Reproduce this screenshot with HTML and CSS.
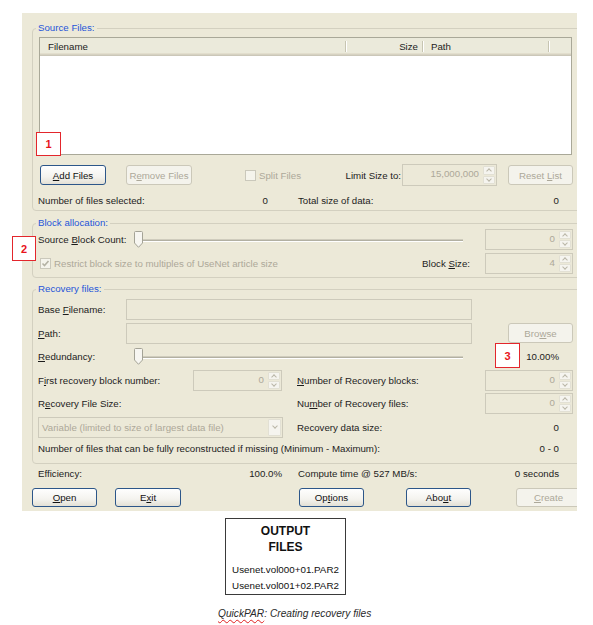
FILE: index.html
```html
<!DOCTYPE html>
<html>
<head>
<meta charset="utf-8">
<title>QuickPAR</title>
<link rel="stylesheet" href="styles.css">
</head>
<body>
<div class="page">
  <div class="window">

    <div class="group g-source">
      <span class="legend">Source Files:</span>
      <div class="listview">
        <div class="lv-head">
          <div class="lv-col c-name">Filename</div>
          <div class="lv-col c-size">Size</div>
          <div class="lv-col c-path">Path</div>
          <div class="lv-col c-rest"></div>
        </div>
      </div>
      <div class="row r-btns">
        <button class="btn b-add"><u>A</u>dd Files</button>
        <button class="btn dis b-remove">R<u>e</u>move Files</button>
        <div class="chk-wrap w-split"><span class="chk"></span><span class="gray">Split Files</span></div>
        <div class="lbl-right w-limit">Limit Size to:</div>
        <div class="spin s-limit"><div class="spin-box">15,000,000</div><div class="spin-arrows"><span class="arr up"></span><span class="arr dn"></span></div></div>
        <button class="btn dis b-reset">Reset <u>L</u>ist</button>
      </div>
      <div class="row r-info">
        <div class="kv kv-src-left"><span>Number of files selected:</span><span>0</span></div>
        <div class="kv kv-src-right"><span>Total size of data:</span><span>0</span></div>
      </div>
    </div>

    <div class="group g-block">
      <span class="legend">Block allocation:</span>
      <div class="row">
        <div class="lbl w-96">Source <u>B</u>lock Count:</div>
        <div class="slider"><span class="track"></span><svg class="thumb" width="9" height="17" viewBox="0 0 9 17"><path d="M0.5 1.5 Q0.5 0.5 1.5 0.5 H7.5 Q8.5 0.5 8.5 1.5 V12 L4.5 16.3 L0.5 12 Z" fill="#f7f6f1" stroke="#a4a396"/></svg></div>
        <div class="spin s-right"><div class="spin-box">0</div><div class="spin-arrows"><span class="arr up"></span><span class="arr dn"></span></div></div>
      </div>
      <div class="row r-gap2">
        <div class="chk-wrap w-restrict"><span class="chk checked"><svg width="9" height="9" viewBox="0 0 9 9"><path d="M1.5 4.5 L3.5 6.5 L7.5 2" fill="none" stroke="#b4b2a4" stroke-width="1.6"/></svg></span><span class="gray">Restrict block size to multiples of UseNet article size</span></div>
        <div class="lbl lbl-bs">Block <u>S</u>ize:</div>
        <div class="spin s-right"><div class="spin-box">4</div><div class="spin-arrows"><span class="arr up"></span><span class="arr dn"></span></div></div>
      </div>
    </div>

    <div class="group g-recov">
      <span class="legend">Recovery files:</span>
      <div class="row">
        <div class="lbl w-88">Base <u>F</u>ilename:</div>
        <div class="field w-346"></div>
      </div>
      <div class="row r-gap2">
        <div class="lbl w-88"><u>P</u>ath:</div>
        <div class="field w-346"></div>
        <button class="btn dis b-browse">Bro<u>w</u>se</button>
      </div>
      <div class="row r-gap1">
        <div class="lbl w-96"><u>R</u>edundancy:</div>
        <div class="slider"><span class="track"></span><svg class="thumb" width="9" height="17" viewBox="0 0 9 17"><path d="M0.5 1.5 Q0.5 0.5 1.5 0.5 H7.5 Q8.5 0.5 8.5 1.5 V12 L4.5 16.3 L0.5 12 Z" fill="#f7f6f1" stroke="#a4a396"/></svg></div>
        <div class="lbl-right w-96">10.00%</div>
      </div>
      <div class="row r-gap2">
        <div class="lbl w-155">F<u>i</u>rst recovery block number:</div>
        <div class="spin s-left"><div class="spin-box">0</div><div class="spin-arrows"><span class="arr up"></span><span class="arr dn"></span></div></div>
        <div class="lbl grow ml-15"><u>N</u>umber of Recovery blocks:</div>
        <div class="spin s-right"><div class="spin-box">0</div><div class="spin-arrows"><span class="arr up"></span><span class="arr dn"></span></div></div>
      </div>
      <div class="row r-gap1">
        <div class="lbl w-244">R<u>e</u>covery File Size:</div>
        <div class="lbl grow ml-15">Nu<u>m</u>ber of Recovery files:</div>
        <div class="spin s-right"><div class="spin-box">0</div><div class="spin-arrows"><span class="arr up"></span><span class="arr dn"></span></div></div>
      </div>
      <div class="row r-gap2">
        <div class="combo"><span class="combo-text">Variable (limited to size of largest data file)</span><span class="combo-btn"><span class="arr dn"></span></span></div>
        <div class="kv grow ml-14 pr-14"><span>Recovery data size:</span><span>0</span></div>
      </div>
      <div class="row r-gap2 r-text">
        <div class="kv grow pr-14"><span>Number of files that can be fully reconstructed if missing (Minimum - Maximum):</span><span>0 - 0</span></div>
      </div>
    </div>

    <div class="row r-eff">
      <div class="kv w-244"><span>Efficiency:</span><span>100.0%</span></div>
      <div class="kv kv-src-right ml-16"><span>Compute time @ 527 MB/s:</span><span>0 seconds</span></div>
    </div>

    <div class="row r-main">
      <button class="btn b-open"><u>O</u>pen</button>
      <button class="btn b-exit">E<u>x</u>it</button>
      <button class="btn b-options">Op<u>t</u>ions</button>
      <button class="btn b-about">Abo<u>u</u>t</button>
      <button class="btn dis b-create"><u>C</u>reate</button>
    </div>
  </div>

  <div class="output">
    <div class="out-title">OUTPUT</div>
    <div class="out-title">FILES</div>
    <div class="out-file first">Usenet.vol000+01.PAR2</div>
    <div class="out-file">Usenet.vol001+02.PAR2</div>
  </div>
  <div class="caption"><span class="spell">QuickPAR</span>: Creating recovery files</div>

  <div class="mark m1">1</div>
  <div class="mark m2">2</div>
  <div class="mark m3">3</div>
</div>
</body>
</html>
```

FILE: styles.css
```css
body {
  margin: 0;
  background: #ffffff;
  font-family: "Liberation Sans", Arial, sans-serif;
  font-size: 9.7px;
  color: #1c1c1c;
}

.page {
  position: relative;
  width: 593px;
  height: 625px;
  padding-top: 13px;
  box-sizing: border-box;
  overflow: hidden;
}

.window {
  margin-left: 22px;
  width: 555px;
  height: 498px;
  background: #ece9d8;
  padding: 15px 0 0 10px;
  box-sizing: border-box;
  overflow: hidden;
}

/* group boxes */
.group {
  position: relative;
  width: 560px;
  border: 1px solid #d3d0c0;
  border-radius: 4px;
  box-sizing: border-box;
  padding-left: 5px;
}

.legend {
  position: absolute;
  top: -7px;
  left: 3px;
  padding: 0 2px;
  background: #ece9d8;
  color: #1f55d8;
  line-height: 12px;
}

.g-source { height: 183px; padding-top: 8px; }
.g-block { height: 55px; margin-top: 12px; padding-top: 4px; }
.g-recov { height: 175px; margin-top: 11px; padding-top: 8px; }

/* rows */
.row {
  display: flex;
  align-items: center;
  width: 535px;
  height: 22px;
  white-space: nowrap;
}

.r-gap1 { margin-top: 1px; }
.r-gap2 { margin-top: 2px; }
.r-text { height: 16px; }

.r-btns { margin-top: 9px; }
.r-info { margin-top: 6px; height: 16px; }

.r-eff { margin-top: 1px; height: 16px; margin-left: 6px; }
.r-main { margin-top: 7px; height: 19px; width: 560px; }

/* list view */
.listview {
  margin-left: 1px;
  width: 533px;
  height: 118px;
  border: 1px solid #a9a898;
  background: #ffffff;
  box-sizing: border-box;
}

.lv-head {
  display: flex;
  height: 18px;
  background: linear-gradient(#ebeadb 0 15px, #e2decd 15px 16px, #d6d2c2 16px 17px, #cbc7b8 17px);
}

.lv-col {
  position: relative;
  height: 17px;
  line-height: 17px;
  box-sizing: border-box;
}

.lv-col::after {
  content: "";
  position: absolute;
  right: 0;
  top: 3px;
  bottom: 3px;
  width: 1px;
  background: #c7c5b2;
  box-shadow: 1px 0 0 #ffffff;
}

.c-name { width: 306px; padding-left: 8px; }
.c-size { width: 77px; padding-right: 5px; text-align: right; }
.c-path { width: 126px; padding-left: 8px; }
.c-rest { flex: 1; }
.c-rest::after { display: none; }

/* buttons */
.btn {
  flex: none;
  font: inherit;
  color: #111111;
  width: 65px;
  height: 20px;
  padding: 0;
  margin: 0;
  border: 1px solid #2c5689;
  border-radius: 3px;
  background: linear-gradient(#fefefe, #f4f3ee 60%, #e3e0d5);
  box-sizing: border-box;
  text-align: center;
  white-space: nowrap;
}

.btn.dis {
  color: #aca899;
  border-color: #cbc8b9;
  background: #f4f3ec;
}

.b-add { margin-left: 2px; width: 66px; }
.b-remove { margin-left: 20px; width: 66px; }
.b-reset { margin-left: 11px; }
.b-browse { margin-left: 36px; }

.r-main .btn { height: 19px; }
.b-open { width: 65px; }
.b-exit { margin-left: 18px; width: 66px; }
.b-options { margin-left: 118px; }
.b-about { margin-left: 42px; }
.b-create { margin-left: 45px; }

/* checkboxes */
.chk-wrap {
  display: flex;
  align-items: center;
}

.w-split { margin-left: 53px; width: 91px; flex: none; }
.w-restrict { margin-left: 2px; flex: 1; }

.chk {
  display: inline-flex;
  align-items: center;
  justify-content: center;
  width: 11px;
  height: 11px;
  border: 1px solid #cac8bb;
  background: #f5f4ec;
  box-sizing: border-box;
  margin-right: 3px;
}

.gray { color: #aca899; }

/* labels */
.lbl { flex: none; }
.lbl-right { text-align: right; flex: none; }
.grow { flex: 1; }
.w-limit { width: 65px; }
.w-88 { width: 88px; }
.w-96 { width: 96px; }
.w-155 { width: 155px; }
.w-244 { width: 244px; flex: none; }
.ml-14 { margin-left: 14px; }
.ml-15 { margin-left: 15px; }
.ml-16 { margin-left: 16px; }
.pr-14 { padding-right: 14px; }
.lbl-bs { margin-right: 15px; }

/* key/value */
.kv {
  display: flex;
  justify-content: space-between;
  align-items: center;
  box-sizing: border-box;
}

.kv-src-left { width: 230px; flex: none; }
.kv-src-right { margin-left: 30px; width: 261px; flex: none; }
.r-eff .kv-src-right { margin-left: 16px; }

/* fields */
.field {
  flex: none;
  height: 21px;
  border: 1px solid #cdcabb;
  background: #ece9d8;
  box-sizing: border-box;
}

.w-346 { width: 346px; }

/* spinners */
.spin {
  flex: none;
  display: flex;
  height: 21px;
}

.s-limit { margin-left: 1px; width: 95px; height: 22px; }
.s-right { width: 88px; }
.s-left { width: 89px; }

.spin-box {
  flex: 1;
  border: 1px solid #cdcabb;
  border-right: none;
  background: #ece9d8;
  color: #aca899;
  text-align: right;
  padding-right: 4px;
  line-height: 18px;
  box-sizing: border-box;
}

.spin-arrows {
  width: 14px;
  display: flex;
  flex-direction: column;
  border: 1px solid #cdcabb;
  border-left: none;
  background: #ece9d8;
  box-sizing: border-box;
  padding: 1px 1px 1px 0;
  gap: 1px;
}

.arr {
  position: relative;
  flex: 1;
  background: #f5f4ef;
  border: 1px solid #e2e0d4;
  border-radius: 1px;
}

.arr::before {
  content: "";
  position: absolute;
  left: 50%;
  top: 50%;
  width: 3px;
  height: 3px;
  border-top: 1px solid #b9b6a7;
  border-left: 1px solid #b9b6a7;
}

.arr.up::before { transform: translate(-50%, -25%) rotate(45deg); }
.arr.dn::before { transform: translate(-50%, -75%) rotate(225deg); }

/* sliders */
.slider {
  position: relative;
  width: 329px;
  height: 22px;
  flex: none;
}

.track {
  position: absolute;
  left: 6px;
  right: 0;
  top: 11px;
  height: 1px;
  background: #b2b0a2;
  border-bottom: 1px solid #ffffff;
  border-top: 1px solid #cfccbd;
}

.thumb {
  position: absolute;
  left: 0;
  top: 3px;
}

.g-block .row:first-of-type .spin { margin-left: 22px; }

/* combo */
.combo {
  display: flex;
  width: 245px;
  height: 21px;
  border: 1px solid #cdcabb;
  background: #ece9d8;
  box-sizing: border-box;
  flex: none;
}

.combo-text {
  flex: 1;
  color: #aca899;
  padding-left: 3px;
  line-height: 19px;
}

.combo-btn {
  display: flex;
  width: 15px;
  padding: 1px;
  box-sizing: border-box;
}

/* output box */
.output {
  margin: 7px 0 0 225px;
  width: 121px;
  height: 77px;
  border: 1px solid #3a3a3a;
  box-sizing: border-box;
  padding-top: 4px;
  text-align: center;
  font-size: 9.8px;
  color: #111111;
}

.out-title {
  font-size: 12px;
  font-weight: bold;
  line-height: 16px;
}

.out-file { line-height: 16px; }
.out-file.first { margin-top: 7px; }

.caption {
  margin: 12px 0 0 218px;
  font-size: 10.2px;
  font-style: italic;
  line-height: 14px;
  color: #2a2a2a;
}

.spell {
  text-decoration: underline wavy #e02020;
  text-decoration-thickness: 1px;
  text-underline-offset: 2px;
}

/* annotation marks */
.mark {
  position: absolute;
  display: flex;
  align-items: center;
  justify-content: center;
  border: 1px solid #e3262c;
  background: #ffffff;
  color: #e8141b;
  font-weight: bold;
  font-size: 11px;
  box-sizing: border-box;
}

.m1 { left: 36px; top: 132px; width: 25px; height: 24px; }
.m2 { left: 12px; top: 236px; width: 24px; height: 25px; }
.m3 { left: 495px; top: 343px; width: 25px; height: 25px; }
```
